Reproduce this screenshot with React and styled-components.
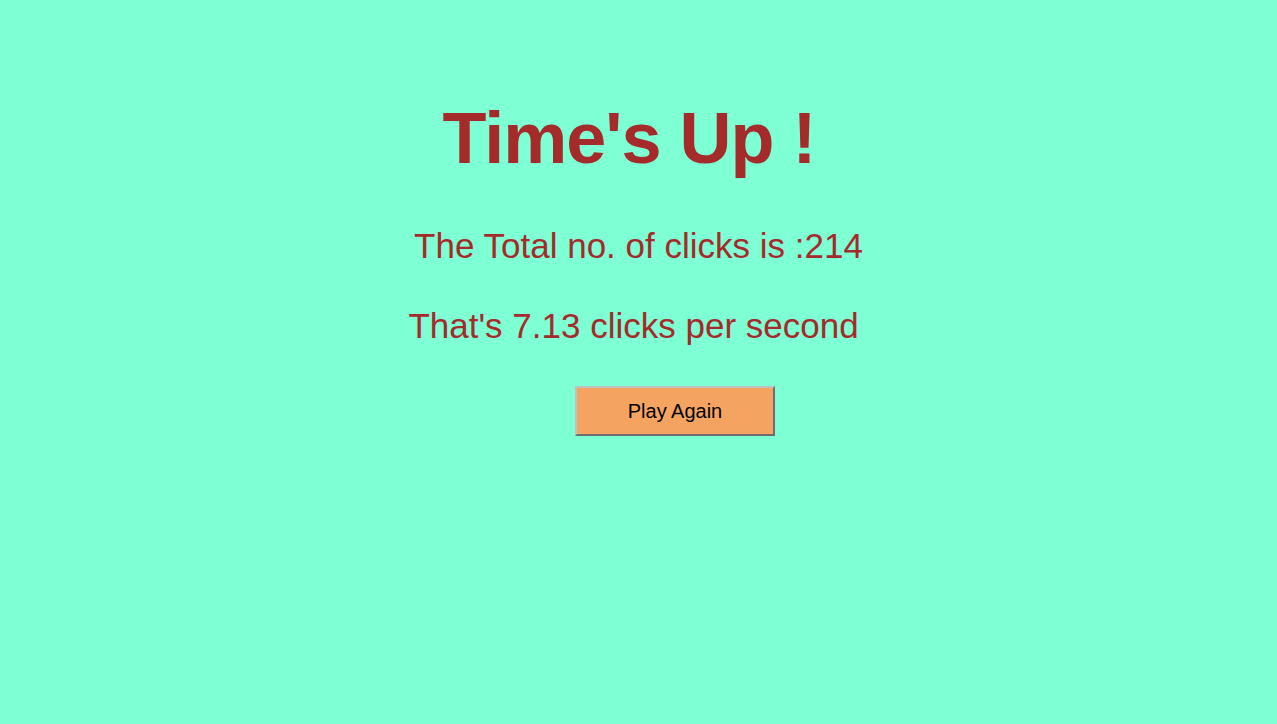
import React from 'react';
import styled, { createGlobalStyle } from 'styled-components';

const GlobalStyle = createGlobalStyle`
  html, body {
    margin: 0;
    padding: 0;
    background: #7fffd4;
  }
  body {
    font-family: "Liberation Sans", Arial, sans-serif;
  }
`;

const Page = styled.main`
  min-height: 100vh;
  display: flex;
  flex-direction: column;
  align-items: center;
  padding-top: 98px;
  box-sizing: border-box;
  background: #7fffd4;
  color: #a52a2a;
`;

const Title = styled.h1`
  margin: 0 19px 0 0;
  font-size: 72px;
  line-height: 80px;
  font-weight: 700;
  letter-spacing: -1px;
`;

const Stat = styled.p`
  margin: ${({ $top }) => $top}px ${({ $shift }) => $shift || 0}px 0 0;
  font-size: 35px;
  line-height: 40px;
  font-weight: 400;
`;

const PlayButton = styled.button`
  margin: 40px 0 0 73px;
  width: 200px;
  height: 50px;
  padding: 0;
  background: #f4a460;
  color: #000;
  font-family: "Liberation Sans", Arial, sans-serif;
  font-size: 20px;
  border: 2px solid;
  border-color: #c0c0c0 #6e6e6e #6e6e6e #c0c0c0;
  cursor: pointer;
`;

const App = () => {
  const clicks = 214;
  const seconds = 30;

  return (
    <>
      <GlobalStyle />
      <Page>
        <Title>Time's Up !</Title>
        <Stat $top={48}>The Total no. of clicks is :{clicks}</Stat>
        <Stat $top={40} $shift={10}>That's {(clicks / seconds).toFixed(2)} clicks per second</Stat>
        <PlayButton>Play Again</PlayButton>
      </Page>
    </>
  );
};

export default App;
